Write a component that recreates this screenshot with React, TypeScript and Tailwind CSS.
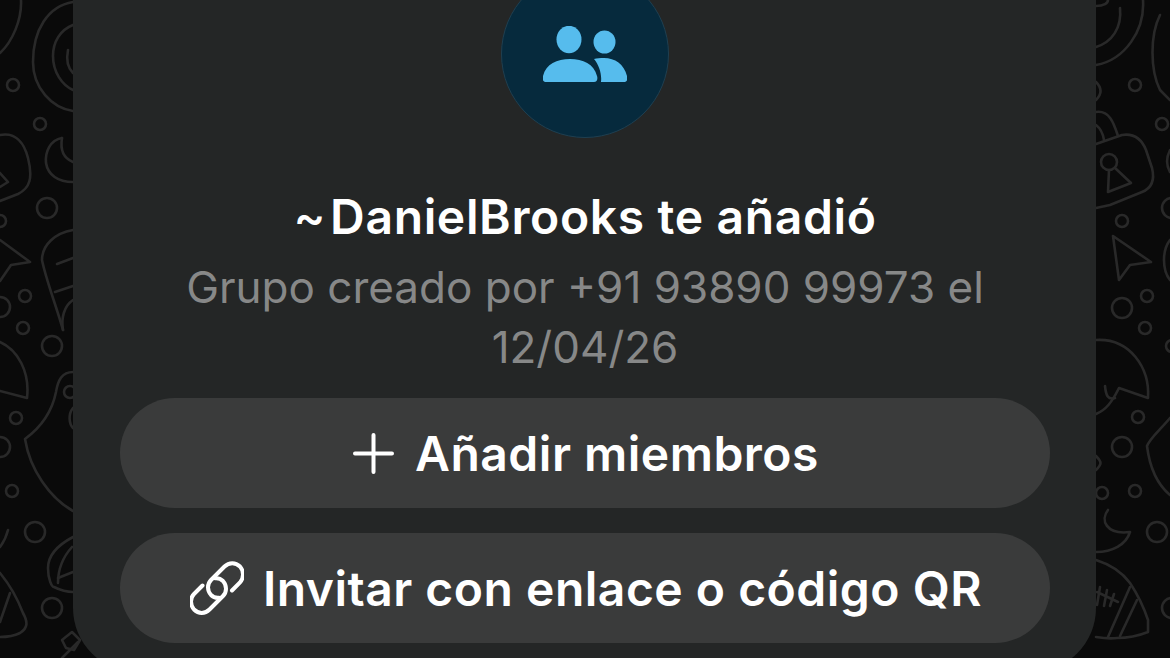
function Doodles() {
  return (
    <svg
      className="absolute inset-0"
      width="1170"
      height="658"
      viewBox="0 0 1170 658"
      fill="none"
      stroke="#292929"
      strokeWidth="2.6"
      strokeLinecap="round"
      strokeLinejoin="round"
    >
      {/* left side */}
      <path d="M21 0C22 20 12 42 0 53" />
      <path d="M73 2C48 6 33 30 33 62C33 88 52 108 73 111" />
      <path d="M73 25C60 30 53 42 53 56C53 72 62 85 73 90" />
      <path d="M68 50C66 60 68 68 73 73" />
      <path d="M0 135C15 132 24 142 28 158C33 178 30 188 18 194L0 201" />
      <path d="M0 173L8 182L0 187" />
      <path d="M62 138C50 140 45 152 46 163C48 175 58 182 73 182" />
      <path d="M62 138C60 150 63 158 73 162" />
      <path d="M0 240L30 262L11 265L0 281" />
      <path d="M73 230C55 233 42 245 42 260C46 280 56 305 63 330" />
      <path d="M57 264L73 258" />
      <path d="M55 292L73 286" />
      <path d="M73 300C64 306 61 318 63 330" />
      <path d="M0 342C18 350 30 372 27 398L0 391" />
      <path d="M73 372C62 372 58 380 56 392C52 412 40 428 25 439C30 470 50 498 73 511" />
      <path d="M73 408C68 414 69 424 73 428" />
      <path d="M73 537C58 545 48 555 48 568C48 580 52 587 54 587C60 590 66 592 73 592" />
      <path d="M72 547C62 558 58 572 58 583" />
      <path d="M58 578L73 572" />
      <path d="M0 573C10 585 18 600 23 613C28 622 28 628 20 633C14 636 8 637 0 637" />
      <path d="M10 593L0 622" />
      <path d="M8 530C6 538 3 543 0 547" />
      <path d="M62 640L72 632L80 640L74 650L66 648Z" />
      <path d="M78 642L62 658" />
      <circle cx="13" cy="85" r="6" />
      <circle cx="40" cy="124" r="6" />
      <circle cx="47" cy="208" r="10" />
      <circle cx="0" cy="221" r="6" />
      <circle cx="25" cy="296" r="6" />
      <circle cx="0" cy="307" r="10" />
      <circle cx="23" cy="328" r="6" />
      <circle cx="52" cy="346" r="10" />
      <circle cx="16" cy="418" r="6" />
      <circle cx="0" cy="447" r="10" />
      <circle cx="12" cy="491" r="6" />
      <circle cx="35" cy="532" r="10" />
      <circle cx="52" cy="608" r="10" />
      <circle cx="70" cy="392" r="6" />

      {/* right side */}
      <path d="M1096 65C1125 60 1145 30 1143 0" />
      <path d="M1096 47C1112 42 1122 28 1120 8" />
      <path d="M1096 6C1104 6 1108 3 1108 0" />
      <path d="M1096 82C1102 88 1102 94 1096 100" />
      <path d="M1096 112C1110 110 1114 124 1118 136" />
      <path d="M1096 125C1100 128 1103 134 1104 140" />
      <path d="M1096 144L1122 135C1135 133 1142 140 1146 150L1152 168C1155 180 1152 188 1142 192L1110 205L1096 208" />
      <circle cx="1109" cy="162" r="8" />
      <path d="M1109 170L1108 192L1131 183L1115 168" />
      <path d="M1113 236L1151 262L1130 265L1119 280Z" />
      <path d="M1160 15C1150 35 1150 70 1160 90L1170 100" />
      <path d="M1170 150C1166 158 1166 165 1170 172" />
      <path d="M1170 240C1162 250 1162 270 1170 280" />
      <path d="M1096 340C1130 338 1150 368 1148 398L1119 388C1112 402 1106 410 1096 414" />
      <path d="M1105 386C1106 396 1108 400 1115 398" />
      <path d="M1170 418C1160 430 1150 438 1147 446C1150 470 1158 485 1170 495" />
      <path d="M1108 510C1100 520 1106 535 1130 532C1126 545 1112 552 1096 552" />
      <path d="M1096 560C1112 565 1122 572 1130 583C1138 595 1144 608 1148 620L1148 632C1138 636 1128 638 1117 638C1110 639 1102 638 1096 637" />
      <path d="M1130 587L1108 637M1137 600L1120 636" />
      <path d="M1097 592L1118 602M1100 587L1097 605M1107 590L1104 606M1114 594L1110 606" />
      <path d="M1096 456C1102 462 1102 464 1096 470" />
      <circle cx="1135" cy="85" r="6" />
      <circle cx="1162" cy="124" r="6" />
      <circle cx="1122" cy="221" r="6" />
      <circle cx="1172" cy="208" r="10" />
      <circle cx="1147" cy="296" r="6" />
      <circle cx="1122" cy="308" r="10" />
      <circle cx="1145" cy="328" r="6" />
      <circle cx="1172" cy="346" r="6" />
      <circle cx="1138" cy="417" r="6" />
      <circle cx="1122" cy="447" r="10" />
      <circle cx="1135" cy="491" r="6" />
      <circle cx="1102" cy="493" r="6" />
      <circle cx="1157" cy="532" r="10" />
      <circle cx="1172" cy="608" r="10" />
    </svg>
  );
}

function GroupIcon() {
  return (
    <svg width="84" height="56" viewBox="0 0 84 56" fill="#56bced">
      <ellipse cx="26" cy="13.5" rx="12.5" ry="13.7" />
      <ellipse cx="61.5" cy="16" rx="11" ry="11.5" />
      <path d="M3 56C0 56-1 53 0 50C3 38 14 33 27 33C40 33 51 38 54 50C55 53 54 56 51 56Z" />
      <path d="M51 33C54 32 57 32 61 32C72 32 81 38 84 50C85 53 84 56 81 56H58C59 48 56 39 51 33Z" />
    </svg>
  );
}

function PlusIcon() {
  return (
    <svg className="mr-[21px] ml-[2px]" width="41" height="41" viewBox="0 0 41 41" stroke="white" strokeWidth="4" strokeLinecap="round">
      <path d="M20.5 2V39M2 20.5H39" />
    </svg>
  );
}

function LinkIcon() {
  return (
    <svg className="mr-[19px] ml-[2px]" width="54" height="54" viewBox="0 0 54 54" fill="none" stroke="white" strokeWidth="4" strokeLinecap="round">
      <path d="M12.5 24.5L4 33C0 37 0 44 4 48.5C8.5 53 15 53 19.5 48.5L33 35C37 31 37 24.5 33 20C31 18 28 17 25 17.3" />
      <path d="M42 29.5L50 21.5C54 17 54 10 50 5.5C45.5 1 39 1 34.5 5.5L21 19C17 23 17 29.5 21 34C23 36 26 37 29 36.7" />
    </svg>
  );
}

function ActionButton({ icon, label }: { icon: React.ReactNode; label: string }) {
  return (
    <button className="flex h-[110px] w-full items-center justify-center rounded-[55px] bg-[#3a3b3b] text-[48px] font-semibold tracking-[0.5px] text-white">
      {icon}
      <span className="pt-[2px]">{label}</span>
    </button>
  );
}

export default function App() {
  return (
    <div className="relative h-[658px] w-[1170px] overflow-hidden bg-[#0a0a0a] font-['Inter',sans-serif]">
      <Doodles />
      <div className="relative ml-[73px] flex h-[672px] w-[1023px] flex-col items-center rounded-b-[64px] bg-[#242626] pr-[46px] pl-[47px]">
        <div className="-mt-[30px] flex h-[168px] w-[168px] shrink-0 items-center justify-center rounded-full border border-[#1f3f50] bg-[#062a3d]">
          <GroupIcon />
        </div>
        <p className="mt-[49px] text-[48px] leading-[60px] font-semibold tracking-[0.65px] text-white">
          <span className="mr-[4px] font-medium">~</span>DanielBrooks te añadió
        </p>
        <p className="mt-[10px] w-[860px] text-center text-[44px] leading-[60px] text-[#878888]">
          Grupo creado por +91 93890 99973 el 12/04/26
        </p>
        <div className="mt-[21px] flex w-full flex-col gap-[25px]">
          <ActionButton icon={<PlusIcon />} label="Añadir miembros" />
          <ActionButton icon={<LinkIcon />} label="Invitar con enlace o código QR" />
        </div>
      </div>
    </div>
  );
}
